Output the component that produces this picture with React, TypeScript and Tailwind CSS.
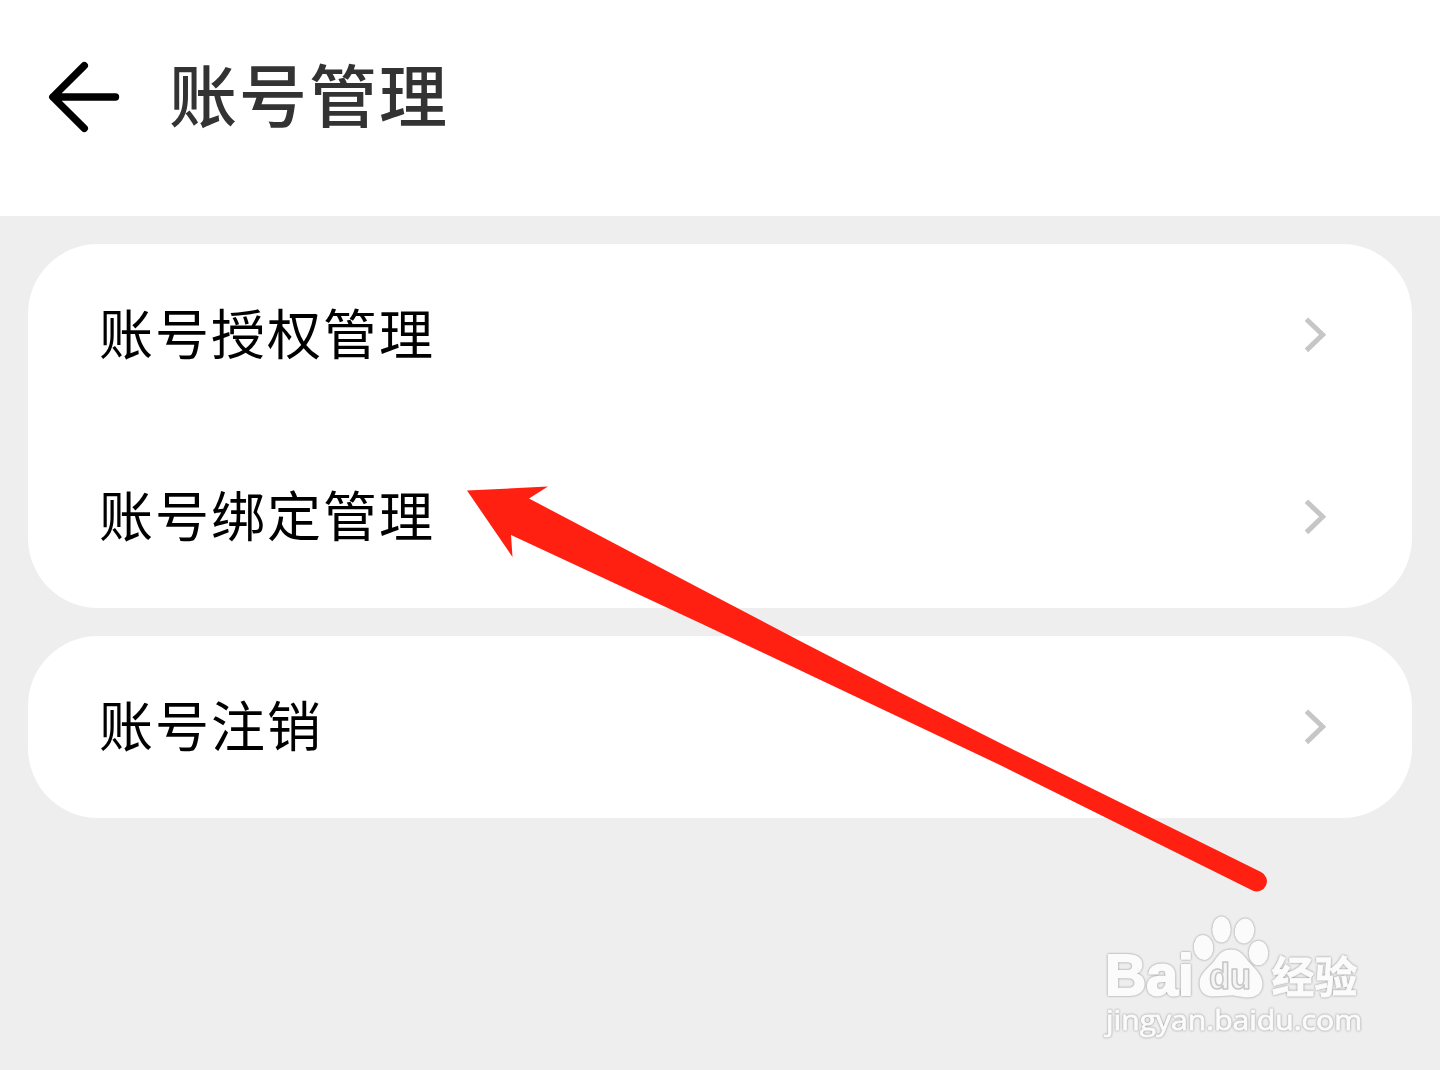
interface SettingItem {
  id: string;
  label: string;
}

const GROUPS: SettingItem[][] = [
  [
    { id: 'auth', label: '账号授权管理' },
    { id: 'binding', label: '账号绑定管理' },
  ],
  [{ id: 'cancel', label: '账号注销' }],
];

function BackArrow() {
  return (
    <svg
      className="h-[72px] w-[72px] shrink-0"
      viewBox="0 0 72 72"
      fill="none"
      stroke="#000"
      strokeWidth="7.4"
      strokeLinecap="round"
      strokeLinejoin="round"
    >
      <path d="M36.3 4.7 L4.8 36 L36.3 67.3 M5 36 H67.5" />
    </svg>
  );
}

function Chevron() {
  return (
    <svg className="h-9 w-[22px] shrink-0" viewBox="0 0 22 36" fill="none" stroke="#c6c6c6" strokeWidth="5">
      <path d="M2.4 2.2 L18.6 17.8 L2.4 33.4" />
    </svg>
  );
}

function SettingRow({ label }: { label: string }) {
  return (
    <button className="flex h-[182px] w-full items-center justify-between pr-[86px] pl-[71px] text-left">
      <span className="pb-[7px] text-[54px] leading-none tracking-[2px] text-black">{label}</span>
      <Chevron />
    </button>
  );
}

// Red pointer laid over the binding row
function Pointer() {
  return (
    <svg className="pointer-events-none absolute top-[480px] left-[460px] h-[420px] w-[820px]" viewBox="460 480 820 420">
      <path
        d="M467 490.5 L548 486.5 L529 498.5 L700 588.5 L800 641 L900 692.5 L1000 743 L1261 872 A10 10 0 0 1 1252.5 890.5 L1000 765 L700 623 L511 535 L512.5 557 Z"
        fill="#ff2012"
      />
    </svg>
  );
}

function Watermark() {
  return (
    <svg
      className="pointer-events-none absolute top-[900px] left-[1090px] h-[150px] w-[290px] font-['Liberation_Sans','Noto_Sans_CJK_SC',sans-serif] drop-shadow-[0_0_1px_#8c8c8c]"
      viewBox="0 0 290 150"
      fill="#fbfbfb"
      strokeLinejoin="round"
    >
      <text x="15" y="95" fontSize="57" fontWeight="700" textLength="89" lengthAdjust="spacingAndGlyphs" stroke="#fbfbfb" strokeWidth="2">
        Bai
      </text>
      <ellipse cx="113.5" cy="47.5" rx="9.8" ry="12.5" transform="rotate(-6 113.5 47.5)" />
      <ellipse cx="131.5" cy="29.5" rx="9.3" ry="13" />
      <ellipse cx="154.5" cy="31" rx="9.8" ry="12.5" transform="rotate(8 154.5 31)" />
      <ellipse cx="168.5" cy="53" rx="9.8" ry="12.3" />
      <path d="M141 49.5 C149 49.5 153 54 158 61 C163 67 172.5 74 172.5 84 C172.5 93 166 97.5 158 97.5 C151 97.5 147 95.5 141 95.5 C134 95.5 130 96.5 123 96.5 C114 96.5 109.5 91 109.5 83 C109.5 73 119 68 125 60 C129 54 133 49.5 141 49.5 Z" />
      <text x="119" y="89" fontSize="36" fontWeight="700" textLength="42" lengthAdjust="spacingAndGlyphs" fill="#f4f4f4" stroke="#c6c6c6" strokeWidth="1.6">
        du
      </text>
      <text x="181.5" y="92.5" fontSize="43" fontWeight="700" stroke="#fbfbfb" strokeWidth="0.8">
        经验
      </text>
      <text x="16" y="130" className="font-['Open_Sans',sans-serif]" fontSize="27" fontWeight="500" textLength="256" lengthAdjust="spacingAndGlyphs" stroke="#fbfbfb" strokeWidth="0.9">
        jingyan.baidu.com
      </text>
    </svg>
  );
}

export default function App() {
  return (
    <div className="relative flex h-[1070px] w-[1440px] flex-col overflow-hidden bg-[#eeeeee] font-['Noto_Sans_CJK_SC',sans-serif]">
      <header className="flex h-[216px] items-start bg-white pt-[61px] pl-12">
        <BackArrow />
        <h1 className="-mt-1 ml-[49px] text-[68px] leading-[72px] font-medium tracking-[2px] text-[#333333]">账号管理</h1>
      </header>

      <main className="flex flex-col gap-7 p-7">
        {GROUPS.map((items) => (
          <section key={items[0].id} className="overflow-hidden rounded-[70px] bg-white">
            {items.map((item) => (
              <SettingRow key={item.id} label={item.label} />
            ))}
          </section>
        ))}
      </main>

      <Pointer />
      <Watermark />
    </div>
  );
}
